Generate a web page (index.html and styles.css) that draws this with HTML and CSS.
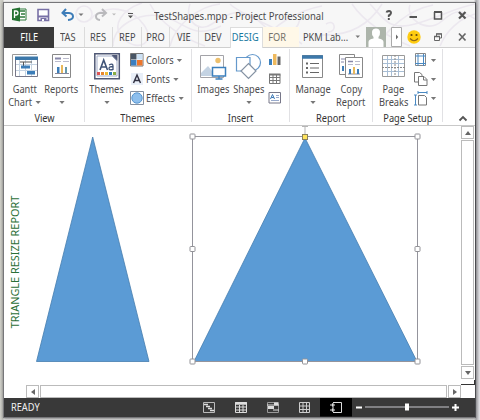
FILE: index.html
```html
<!DOCTYPE html>
<html lang="en">
<head>
<meta charset="utf-8">
<title>TestShapes.mpp - Project Professional</title>
<link rel="stylesheet" href="styles.css">
</head>
<body>
<div class="window">
  <div class="top">
    <svg class="swirls" width="471" height="44" viewBox="4 3 471 44" fill="none" stroke="#ece8ef" stroke-width="1.6">
      <circle cx="84" cy="14" r="8"/><path d="M90 20c15-18 42-12 54 5s-5 28-20 14 0-30 18-36M113 46c0-20 25-34 48-30s30 25 60 10M150 4c10 20 35 35 55 42M170 46c5-22 30-40 50-42M190 4c-6 15 8 30 22 20s30-20 50 0 35 8 38-5M230 4c12 12 50 24 72 40M260 46c12-22 40-36 62-40M326 24c10-6 11 9 2 8M322 35c28 1 47-10 60-31M352 4c12 18 36 33 58 42M370 4c12 12 18 28 45 20s40-16 60-20M378 46c10-18 30-36 55-41M410 5c-5 12 16 30 32 16s20-10 33-2M440 46c6-15 20-28 35-32"/>
    </svg>
    <div class="titlebar">
      <svg class="quick" width="130" height="20" viewBox="10 6 130 20" fill="none">
        <path d="M18 9h8v11h-8z" fill="#fff" stroke="#2f7a3c"/><path d="M20 11h5M21 14h4M20 17h5" stroke="#2f7a3c" stroke-width="1.5"/><path d="M12 9l8-1.5v14L12 20z" fill="#267233"/><path d="M14.500 18v-7h1.500q2 0 2 2t-2 2h-1.500" stroke="#fff" stroke-width="1.300"/>
        <path d="M38 9.500h10.500v11H38z" fill="#fff" stroke="#7870a6" stroke-width="1.600"/><path d="M38 15.500h10.500v2H38z" fill="#7870a6"/><path d="M40.500 18h6v3h-6z" fill="#7870a6"/><path d="M42 19h2v2h-2z" fill="#fff"/>
        <path d="M66 9l-3.500 4 4 3.500M63.500 13H69q4 .5 4 3.500t-5 3.500" stroke="#3d7cb8" stroke-width="2"/><path d="M78.500 13.500h5l-2.500 2.500z" fill="#777"/>
        <path d="M102 9l4 4-4 3.500M105 13h-5q-4 .5-4 3.500t4 3.500" stroke="#b9b9bc" stroke-width="2"/><path d="M112 13.500h4l-2 2z" fill="#bbb"/>
        <path d="M128 13.500h5" stroke="#555"/><path d="M128 15.500h5l-2.500 2.800z" fill="#555"/>
      </svg>
      <div class="title"><span class="t">TestShapes.mpp - Project Professional</span></div>
      <svg class="controls" width="90" height="20" viewBox="383 6 90 20" fill="none" stroke="#555" stroke-width="1.500">
        <path d="M386.500 12.500q.3-1.500 2.500-1.500 2.300.2 2 2t-2.200 2.500v1.500M388.800 18v2" stroke-width="1.900"/><path d="M409.500 17h7.500" stroke-width="2"/><path d="M434.500 12v7h7v-7"/><path d="M434 12h8" stroke-width="2"/><path d="M459 12l6.500 6.500M465.500 12L459 18.500" stroke-width="2.200"/>
      </svg>
    </div>
    <div class="tabs">
      <div class="tab file"><span class="t">FILE</span></div>
      <div class="tab w30"><span class="t">TAS</span></div>
      <div class="tab w28"><span class="t">RES</span></div>
      <div class="tab w29"><span class="t">REP</span></div>
      <div class="tab w28"><span class="t">PRO</span></div>
      <div class="tab w29"><span class="t">VIE</span></div>
      <div class="tab dev"><span class="t">DEV</span></div>
      <div class="tab active"><span class="t">DESIG</span></div>
      <div class="tab format"><span class="t">FOR</span></div>
      <div class="account"><span class="t">PKM Lab...</span></div>
      <svg class="tabicons" width="120" height="20" viewBox="354 27 120 20" fill="none">
        <path d="M355.500 35.500h4.500l-2.250 2.500z" fill="#777"/>
        <path d="M366 27h20v20h-20z" fill="#adb5ab"/><path d="M368.500 47v-5q0-3 5-3.500v-1.500q-2-2-1.500-5.200.6-3.300 4-3.300t4 3.300q.3 3.200-1.500 5.200v1.500q5 .5 5 3.500v5z" fill="#fff"/>
        <path d="M391.500 27.500h10v19h-10z" fill="#fff" stroke="#aaa"/><path d="M396 34.500v5l2.200-2.500z" fill="#666"/>
        <circle cx="414" cy="37" r="6.700" fill="#fc1"/><circle cx="411.500" cy="35" r="1.100" fill="#664a12"/><circle cx="416.500" cy="35" r="1.100" fill="#664a12"/><path d="M410 38.500q4 4.500 8 0" stroke="#8b6518" stroke-width="1.200"/>
        <path d="M434.500 36.500h5v4h-5zM436.500 36v-2h5v4h-2" stroke="#666"/><path d="M436 33.800h6M434 36.500h6" stroke="#666" stroke-width="1.300"/>
        <path d="M459 33.500l6.500 7M465.500 33.500l-6.500 7" stroke="#666" stroke-width="1.700"/>
      </svg>
    </div>
  </div>

  <div class="ribbon">
    <section class="group g-view">
      <div class="tools">
        <div class="tool gantt">
          <svg width="28" height="28" viewBox="11 53 28 28" fill="none"><path d="M12.500 76V54.500H37" stroke="#999"/><path d="M15.500 57.500h22v19h-22z" fill="#fff" stroke="#778"/><path d="M15 56.500h23v3.500H15z" fill="#3c78aa"/><path d="M19.500 60v16M25.500 60v16M31.500 60v16M16 64.500h21M16 70.500h21" stroke="#c5d3e2"/><path d="M20 62h12M23.500 62v5" stroke="#555"/><path d="M21 65.500h9v3h-9zM27 71h8v3.500h-8z" fill="#3c7db8"/></svg>
          <span class="t">Gantt</span><span class="t">Chart<i></i></span>
        </div>
        <div class="tool reports">
          <svg width="22" height="28" viewBox="50 53 22 28" fill="none"><path d="M51.500 54.500h18v23h-18z" fill="#fff" stroke="#888"/><path d="M54 58.500h6" stroke="#88a" stroke-width="2"/><path d="M62 58.500h6M62 61.500h6M54 61.500h6" stroke="#bbc"/><path d="M54 73.500h14" stroke="#889"/><path d="M56 67h2.500v6H56z" fill="#3c7db8"/><path d="M60 65h2v8h-2z" fill="#e8b85b"/><path d="M64 67h2v6h-2z" fill="#69a"/></svg>
          <span class="t">Reports</span><span class="t"><i></i></span>
        </div>
      </div>
      <h2><span class="t">View</span></h2>
    </section>
    <section class="group g-themes">
      <div class="tools">
        <div class="tool themes">
          <svg width="28" height="28" viewBox="93 53 28 28" fill="none"><path d="M94.800 53.800h24.500v25H94.800z" fill="#fff" stroke="#4f5875" stroke-width="1.500"/><path d="M97 56h15l5 5v15H97z" stroke="#a2adc8"/><path d="M111.500 55h6v6z" fill="#505977"/><path d="M100 70l3.700-10 3.800 10M101.300 67h5" stroke="#405477" stroke-width="1.600"/><path d="M109 65q4-2 4 1v4m0-3.500q-4 0-4 2t4 1" stroke="#405477" stroke-width="1.300"/><path d="M97 73.500h3" stroke="#d55" stroke-width="3"/><path d="M101 73.500h3" stroke="#e8872d" stroke-width="3"/><path d="M105 73.500h3" stroke="#efba34" stroke-width="3"/><path d="M109 73.500h3" stroke="#2b7ab9" stroke-width="3"/><path d="M113 73.500h3" stroke="#88ad44" stroke-width="3"/></svg>
          <span class="t">Themes</span><span class="t"><i></i></span>
        </div>
        <div class="rows">
          <div class="row"><svg width="14" height="14"><path d="M.5.500h12.500v12.500H.5z" fill="#fff" stroke="#777"/><path d="M1 1h5.500v5.500H1z" fill="#485565"/><path d="M7 1h5.500v5.500H7z" fill="#cce1f4"/><path d="M1 7h5.500v5.500H1z" fill="#3b7fc0"/><path d="M7 7h5.500v5.500H7z" fill="#ec762d"/></svg><span class="t">Colors<i></i></span></div>
          <div class="row"><svg width="14" height="14" fill="none"><path d="M1 1h12v12H1z" fill="#e9eff8"/><path d="M3.500 11L7 3l3.500 8M4.800 8.500h4.500" stroke="#334" stroke-width="1.500"/></svg><span class="t">Fonts<i></i></span></div>
          <div class="row"><svg width="14" height="14"><path d="M.5.500h13v13H.5z" fill="#fff" stroke="#8590a0"/><circle cx="7" cy="7" r="5.200" fill="#8ebfed" stroke="#5795cf"/></svg><span class="t">Effects<i></i></span></div>
        </div>
      </div>
      <h2><span class="t">Themes</span></h2>
    </section>
    <section class="group g-insert">
      <div class="tools">
        <div class="tool images">
          <svg width="28" height="28" viewBox="200 53 28 28" fill="none"><path d="M201.500 55.500h23v22h-23z" fill="#fff" stroke="#a3a3a8"/><circle cx="219" cy="60.500" r="2.700" fill="#edc06d"/><path d="M202 76v-3l7-7 8 10z" fill="#c4d3e3"/><path d="M213.500 67.500h13v8.500h-13z" fill="#fff" stroke="#3c80bd" stroke-width="1.500"/><path d="M220 76v3M216.500 79h7" stroke="#3c80bd" stroke-width="1.300"/></svg>
          <span class="t">Images</span>
        </div>
        <div class="tool shapes">
          <svg width="28" height="28" viewBox="235 53 28 28" fill="#fff" stroke="#6599cc" stroke-width="1.200"><circle cx="252.500" cy="62.500" r="8"/><path d="M236.500 57.500h13.500v13.500h-13.500z"/><path d="M248.500 63.500l7.500 7.500-7.500 7.500-7.500-7.500z" stroke="#8592a3"/></svg>
          <span class="t">Shapes</span><span class="t"><i></i></span>
        </div>
        <div class="rows small">
          <div class="row"><svg width="14" height="14"><path d="M1 6h3v6H1z" fill="#3b7fbb"/><path d="M5 1h3.500v11H5z" fill="#eeb95d"/><path d="M9.500 3.500h3v8.500h-3z" fill="#666"/></svg></div>
          <div class="row"><svg width="14" height="14" fill="none" stroke="#777"><path d="M1.500 2.500h10.500v9H1.500zM1.500 5.500H12M1.500 8.500H12M5 3v8M8.500 3v8"/><path d="M1 2.500h11.500" stroke-width="2"/></svg></div>
          <div class="row"><svg width="14" height="14" fill="none"><path d="M1 1.500h11.500v10.500H1z" stroke="#778"/><path d="M2.500 8l2-4.500 2 4.500M3.300 6.500h2.500" stroke="#3b78b5"/><path d="M8 4.500h3M8 6.500h3M3 9.500h8" stroke="#9ac"/></svg></div>
        </div>
      </div>
      <h2><span class="t">Insert</span></h2>
    </section>
    <section class="group g-report">
      <div class="tools">
        <div class="tool manage">
          <svg width="24" height="28" viewBox="302 53 24 28" fill="none"><path d="M303.500 55.500h20v22h-20z" fill="#fff" stroke="#888"/><path d="M303 57h21" stroke="#3c78aa" stroke-width="3.500"/><path d="M311 63.500h9M311 68h9M311 72.500h9" stroke="#666" stroke-width="1.200"/><path d="M307 63.500h2M307 68h2M307 72.500h2" stroke="#666" stroke-width="2"/></svg>
          <span class="t">Manage</span><span class="t"><i></i></span>
        </div>
        <div class="tool copy">
          <svg width="26" height="28" viewBox="338 53 26 28" fill="none"><path d="M339.500 54.500h15v20h-15z" fill="#fff" stroke="#888"/><path d="M341 59h4M341 62h3" stroke="#88a"/><path d="M342 66h2v5h-2z" fill="#3c7db8"/><path d="M345.500 57.500h17v20h-17z" fill="#fff" stroke="#888"/><path d="M348 61.500h5" stroke="#88a" stroke-width="1.500"/><path d="M355 61.500h5M355 64.500h5M348 64.500h5" stroke="#bbc"/><path d="M348 74h12" stroke="#889"/><path d="M349 69h2v5h-2zM357 69h2v5h-2z" fill="#3c7db8"/><path d="M353 67h2v7h-2z" fill="#e8b85b"/></svg>
          <span class="t">Copy</span><span class="t">Report</span>
        </div>
      </div>
      <h2><span class="t">Report</span></h2>
    </section>
    <section class="group g-page">
      <div class="tools">
        <div class="tool breaks">
          <svg width="26" height="28" viewBox="381 53 26 28" fill="none"><path d="M382.500 55.500h22v21h-22z" fill="#fff" stroke="#9a9a9a"/><path d="M387.500 56v20M391.500 56v20M398.500 56v20M383 59.500h21M383 63.500h21M383 71.500h21" stroke="#a8bed5"/><path d="M395 55v22M382 67.500h23" stroke="#888" stroke-dasharray="2 1"/></svg>
          <span class="t">Page</span><span class="t">Breaks</span>
        </div>
        <div class="rows setup">
          <div class="row"><svg width="14" height="14" fill="none"><path d="M1.500.500h10v12h-10z" stroke="#888"/><path d="M4 1v12M9.500 1v12M1 3h11M1 10.500h11" stroke="#4a89c2"/></svg><span class="t"><i></i></span></div>
          <div class="row"><svg width="14" height="14" fill="#fff" stroke="#777"><path d="M.5.500h5l2.500 2v7.500H.5z"/><path d="M4.500 4.500h5.500l3 3v6h-8.500z"/><path d="M9.500 4.500v3.500H13" fill="none"/></svg><span class="t"><i></i></span></div>
          <div class="row"><svg width="14" height="15" fill="none"><path d="M4.500 4.500h6l2 2v7.500h-8z" fill="#fff" stroke="#777"/><path d="M1.500 4v10M0 4h3M0 14h3M4 1.500h9M4 0v3M13 0v3" stroke="#4a89c2"/></svg><span class="t"><i></i></span></div>
        </div>
      </div>
      <h2><span class="t">Page Setup</span></h2>
    </section>
    <svg class="collapse" width="10" height="7" fill="none" stroke="#555" stroke-width="1.800"><path d="M1.500 5.500L5 2l3.500 3.500"/></svg>
  </div>

  <div class="work">
    <div class="canvas">
      <span class="report-name">TRIANGLE RESIZE REPORT</span>
      <svg class="drawing" width="400" height="245" viewBox="30 126 400 245">
        <path d="M92.700 137L149 361.500H36.500z" fill="#5b9bd5" stroke="#467daf" stroke-width=".8"/>
        <path d="M305 138L417 361.500H194z" fill="#5b9bd5" stroke="#467daf" stroke-width=".8"/>
        <path d="M305 126v10M302 126.500h6" stroke="#b5b5b5" fill="none"/>
        <path d="M192.500 136.500h225v225h-225z" fill="none" stroke="#94949c"/>
        <g fill="#fff" stroke="#929297"><rect x="190" y="134" width="5" height="5" rx=".7"/><rect x="415" y="134" width="5" height="5" rx=".7"/><rect x="190" y="246.500" width="5" height="5" rx=".7"/><rect x="415" y="246.500" width="5" height="5" rx=".7"/><rect x="190" y="359" width="5" height="5" rx=".7"/><rect x="302.500" y="359" width="5" height="5" rx=".7"/><rect x="415" y="359" width="5" height="5" rx=".7"/></g>
        <rect x="302.500" y="134.500" width="5" height="5" fill="#ffe45d" stroke="#8b825c"/>
      </svg>
    </div>
    <div class="vscroll">
      <div class="btn"><svg width="6" height="4"><path d="M0 4h6L3 0z"/></svg></div>
      <div class="thumb"></div>
      <div class="btn"><svg width="6" height="4"><path d="M0 0h6L3 4z"/></svg></div>
      <div class="corner"></div>
    </div>
  </div>
  <div class="hscroll">
    <div class="btn"><svg width="4" height="6"><path d="M4 0v6L0 3z"/></svg></div>
    <div class="thumb"></div>
    <div class="btn"><svg width="4" height="6"><path d="M0 0v6l4-3z"/></svg></div>
  </div>
  <div class="status">
    <span class="t">READY</span>
    <svg width="275" height="19" viewBox="200 398 275 19" fill="none" stroke="#ddd">
      <path d="M203.500 402.500h11v10h-11z" stroke="#bbb"/><path d="M204 404.500h4M206 406.500h4M208 408.500h4M210 410.500h4" stroke-width="1.500"/>
      <path d="M235.500 402.500h11v10h-11zM236 407h10M236 410h10M239.500 405v7M243 405v7"/><path d="M235 403.500h12" stroke-width="2.500"/>
      <path d="M267.500 402.500h11v10h-11z" stroke="#999"/><path d="M267 405h12M273 410h6" stroke-width="1"/><path d="M268 407.500h6M274 404h4" stroke-width="3"/>
      <path d="M299.500 402.500h10v10h-10zM303 402v10M306.500 402v10M299 406h10M299 409.500h10" stroke="#ccc"/>
      <path d="M320 398h32v18.500h-32z" fill="#000" stroke="none"/><path d="M333 402.500h8.500v10H333M333 403v9" /><path d="M330 405h5M330 410h5M332.500 403.500v3M332.500 408.500v3" stroke-width="1.200"/>
      <path d="M356 407.500h6M452 407.500h7M455.500 404v7" stroke="#fff" stroke-width="2"/><path d="M365 407h84" stroke="#99999d" stroke-width="1.500"/><path d="M405 403.500h4v7h-4z" fill="#fff" stroke="none"/>
    </svg>
  </div>
</div>
</body>
</html>
```
FILE: styles.css
```css
* { box-sizing: border-box; }
html, body { margin: 0; width: 480px; height: 420px; overflow: hidden; }
body {
  padding: 2px 4px 2px 3px;
  background: linear-gradient(90deg, #d2d2cb 0, #c5c5bd 3px, #f4f4f4 4px, #f4f4f4 474px, #a9a9ad 476px, #e6e5e9 480px);
  color: #4b4b4d;
  font-family: "Noto Sans", "Open Sans", sans-serif;
  font-size: 10.5px;
  line-height: 13px;
}
svg { display: block; flex: none; }
.window {
  width: 473px;
  height: 416px;
  border: 1px solid #77777a;
  border-right-color: #4c4c50;
  background: #fff;
  box-shadow: 0 1px 3px #777;
  display: flex;
  flex-direction: column;
}
.t { display: inline-block; white-space: nowrap; transform: scaleX(.88); }
.top { position: relative; height: 44px; background: #f7f7f7; flex: none; }
.swirls { position: absolute; left: 0; top: 0; }
.titlebar, .tabs { position: relative; display: flex; }
.titlebar { height: 24px; padding: 3px 2px 0 6px; }
.title { flex: 1; padding-left: 14px; line-height: 20px; }
.title .t { transform: scaleX(.905); transform-origin: left; }
.tabs { height: 21px; border-bottom: 1px solid #cfcfcf; line-height: 20px; }
.tab { flex: none; display: flex; justify-content: center; border-right: 1px solid #dcdcdc; }
.file { width: 50px; height: 21px; background: #3a3a3a; color: #fff; border: 0; }
.w28 { width: 28px; }
.w29 { width: 29px; }
.w30 { width: 31px; padding-right: 2px; }
.dev { width: 31px; border: 0; padding-right: 4px; }
.active { width: 33px; height: 21px; background: #fff; color: #19799f; border: 1px solid #ddd; border-bottom: 0; line-height: 19px; }
.active .t { margin-left: -2px; }
.format { width: 36px; background: #fff8e8; border: 0; padding-right: 8px; color: #77736c; }
.account { width: 55px; padding-left: 4px; }
.account .t { transform-origin: left; }

.ribbon { height: 79px; flex: none; border-bottom: 1px solid #c9c9c9; display: flex; position: relative; }
.group { flex: none; border-right: 1px solid transparent; border-image: linear-gradient(transparent 3px, #e1e1e4 3px 74px, transparent 74px) 1; display: flex; flex-direction: column; }
.g-view { width: 81px; }
.g-themes { width: 107px; }
.g-insert { width: 98px; }
.g-report { width: 83px; }
.g-page { width: 70px; }
.tools { height: 65px; padding-top: 6px; display: flex; }
.tool { display: flex; flex-direction: column; align-items: center; flex: none; }
.tool .t { height: 13px; }
.tool svg { margin-bottom: 2px; }
h2 { margin: 0; font: inherit; text-align: center; color: #333; line-height: 12px; }
i { display: inline-block; border: 3px solid transparent; border-top-color: #777; border-bottom: 0; margin-left: 4px; vertical-align: 2px; }
.reports i, .themes i, .shapes i, .manage i { margin-left: 0; }
.gantt { width: 42px; }
.reports { width: 31px; }
.themes { width: 44px; }
.g-themes .tools { padding-left: 0; }
.rows { display: flex; flex-direction: column; gap: 5px; }
.row { height: 14px; display: flex; align-items: center; gap: 2px; }
.row .t { transform-origin: left; }
.g-themes .rows { padding-left: 1px; }
.images { width: 42px; }
.shapes { width: 30px; }
.small { margin-left: 4px; }
.manage { width: 46px; }
.copy { width: 30px; }
.breaks { width: 41px; }
.setup i { margin-left: 1px; }
.collapse { align-self: flex-end; margin: 0 0 3px 15px; }

.work { height: 259px; flex: none; display: flex; }
.canvas { flex: 1; position: relative; }
.report-name { position: absolute; left: 11px; top: 136px; width: 0; height: 0; line-height: 0; white-space: nowrap; color: #2b7037; font-size: 10.9px; display: flex; align-items: center; justify-content: center; transform: rotate(-90deg); }
.drawing { position: absolute; left: 26px; top: 0; }
.vscroll { width: 14px; height: 259px; display: flex; flex-direction: column; gap: 1px; }
.btn, .thumb { border: 1px solid #bbb; background: #fff; }
.btn, .vscroll .thumb { width: 13px; }
.btn { height: 13px; flex: none; display: flex; align-items: center; justify-content: center; fill: #666; }
.thumb { flex: 1; }
.corner { height: 5px; border: solid #333; border-width: 0 1px 1px 0; }
.hscroll { height: 13px; flex: none; margin: 0 14px 0 22px; display: flex; gap: 1px; }
.status { height: 19px; flex: none; background: #393939; color: #eee; display: flex; justify-content: space-between; padding-left: 5px; line-height: 19px; }
```
